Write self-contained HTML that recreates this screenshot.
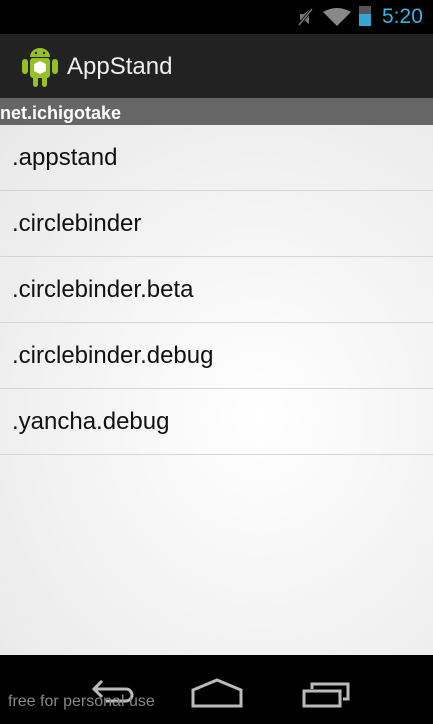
<!DOCTYPE html>
<html><head><style>
body{margin:0;width:433px;height:724px;overflow:hidden;position:relative;font-family:"Liberation Sans",sans-serif;background:#000}
.sb{position:absolute;top:0;left:0;width:433px;height:34px;background:#000}
.ab{position:absolute;top:34px;left:0;width:433px;height:64px;background:#222}
.hd{position:absolute;top:98px;left:0;width:433px;height:27px;background:#666;color:#fff;font-weight:bold;font-size:18px;line-height:30px;padding-left:0}
.list{position:absolute;top:125px;left:0;width:433px;height:530px;background:radial-gradient(ellipse at 60% 55%,#fff 0%,#f6f6f6 40%,#e8e8e8 100%)}
.it{height:65px;border-bottom:1px solid #d6d6d6;font-size:24px;color:#111;line-height:66px;padding-left:12px}
.nav{position:absolute;top:655px;left:0;width:433px;height:69px;background:#000}
</style></head><body>
<div class="sb">
<svg style="position:absolute;left:296px;top:7px" width="20" height="20" viewBox="0 0 20 20"><path d="M4 7h4l5-4v14l-5-4H4z" fill="#777"/><path d="M3 18L16 2" stroke="#000" stroke-width="3"/><path d="M3 18L16 2" stroke="#777" stroke-width="1.5"/></svg>
<svg style="position:absolute;left:323px;top:8px" width="28" height="18" viewBox="0 0 28 18"><path d="M14 18L0 4Q14-4 28 4z" fill="#888"/></svg>
<div style="position:absolute;left:359px;top:6px;width:12px;height:20px;background:#555"></div>
<div style="position:absolute;left:359px;top:14px;width:12px;height:12px;background:#33a5d4"></div>
<div style="position:absolute;left:382px;top:5px;color:#33b5e5;font-size:21px">5:20</div>
</div>
<div class="ab">
<svg style="position:absolute;left:21px;top:11px" width="38" height="44" viewBox="0 0 38 44"><g fill="#97c024"><rect x="9" y="13" width="20" height="20" rx="3"/><path d="M9 12a10 9 0 0 1 20 0z"/><rect x="1" y="14" width="6" height="15" rx="3"/><rect x="31" y="14" width="6" height="15" rx="3"/><rect x="12" y="30" width="5" height="12" rx="2.5"/><rect x="21" y="30" width="5" height="12" rx="2.5"/></g><circle cx="15" cy="8" r="1.2" fill="#222"/><circle cx="23" cy="8" r="1.2" fill="#222"/><path d="M19 16l6 3v7l-6 3-6-3v-7z" fill="#fff"/></svg>
<div style="position:absolute;left:67px;top:19px;color:#eee;font-size:24px">AppStand</div>
</div>
<div class="hd">net.ichigotake</div>
<div class="list">
<div class="it">.appstand</div>
<div class="it">.circlebinder</div>
<div class="it">.circlebinder.beta</div>
<div class="it">.circlebinder.debug</div>
<div class="it">.yancha.debug</div>
</div>
<div class="nav">
<svg style="position:absolute;left:84px;top:22px" width="50" height="28" viewBox="0 0 50 28"><path d="M10 12h32a6 6 0 0 1 0 12H22M18 4l-8 8 8 8" fill="none" stroke="#bbb" stroke-width="3"/></svg>
<svg style="position:absolute;left:191px;top:22px" width="52" height="32" viewBox="0 0 52 32"><path d="M2 29V13L26 3l24 10v16z" fill="none" stroke="#bbb" stroke-width="3"/></svg>
<svg style="position:absolute;left:302px;top:25px" width="50" height="30" viewBox="0 0 50 30"><rect x="2" y="11" width="36" height="15" fill="none" stroke="#bbb" stroke-width="3"/><path d="M10 9V4h36v15h-5" fill="none" stroke="#bbb" stroke-width="3"/></svg>
<div style="position:absolute;left:8px;top:38px;color:#888;font-size:16px">free for personal use</div>
</div>
</body></html>
